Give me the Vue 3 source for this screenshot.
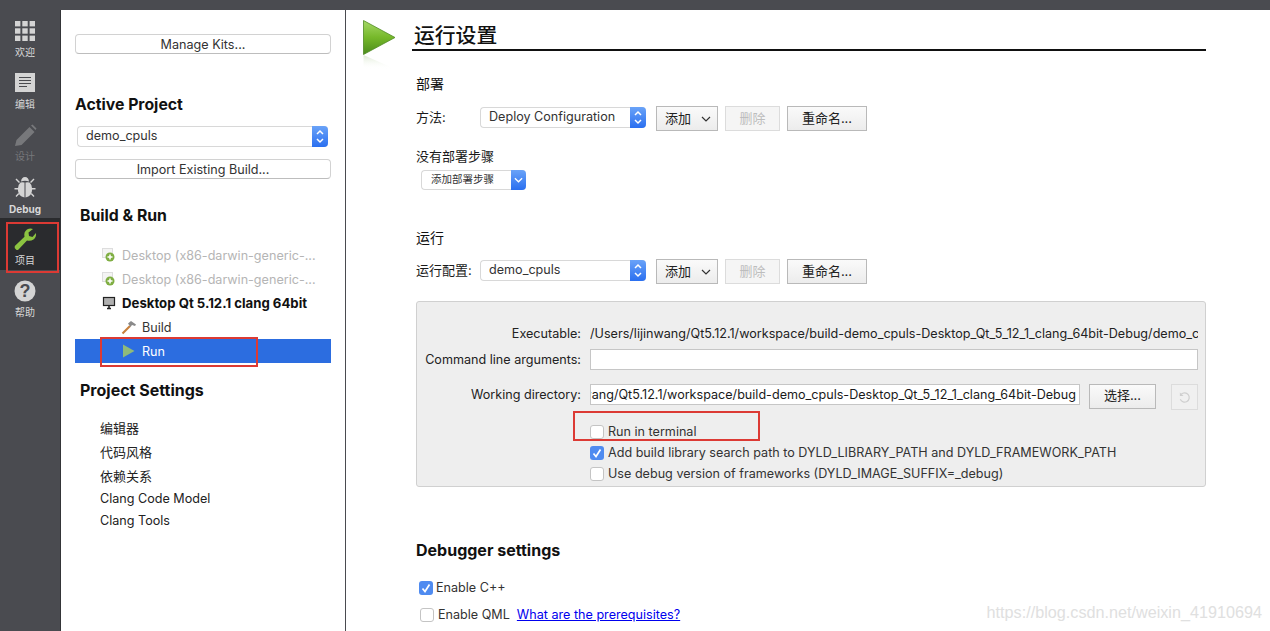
<script setup>
const navItems = [
  { id: 'welcome', label: '欢迎' },
  { id: 'edit', label: '编辑' },
  { id: 'design', label: '设计', disabled: true },
  { id: 'debug', label: 'Debug', bold: true },
  { id: 'project', label: '项目', active: true },
  { id: 'help', label: '帮助' }
]

const settingsLinks = [
  { text: '编辑器', cjk: true },
  { text: '代码风格', cjk: true },
  { text: '依赖关系', cjk: true },
  { text: 'Clang Code Model' },
  { text: 'Clang Tools' }
]
</script>

<template>
  <div class="app">
    <div class="topbar"></div>
    <div class="body">
      <aside class="nav">
        <div
          v-for="item in navItems"
          :key="item.id"
          class="nav-item"
          :class="{ active: item.active, disabled: item.disabled }"
        >
          <svg class="nav-icon" viewBox="0 0 24 24" width="24" height="24">
            <g v-if="item.id === 'welcome'" fill="#d4d4d4">
              <rect x="2" y="2" width="5.4" height="5.4" /><rect x="9.3" y="2" width="5.4" height="5.4" /><rect x="16.6" y="2" width="5.4" height="5.4" />
              <rect x="2" y="9.3" width="5.4" height="5.4" /><rect x="9.3" y="9.3" width="5.4" height="5.4" /><rect x="16.6" y="9.3" width="5.4" height="5.4" />
              <rect x="2" y="16.6" width="5.4" height="5.4" /><rect x="9.3" y="16.6" width="5.4" height="5.4" /><rect x="16.6" y="16.6" width="5.4" height="5.4" />
            </g>
            <g v-else-if="item.id === 'edit'">
              <rect x="2" y="2" width="20" height="19" fill="#d4d4d4" />
              <path d="M6 6.5h12M6 9.500h12M6 12.500h12M6 15.500h8" stroke="#4a4b4f" stroke-width="1.200" />
            </g>
            <path v-else-if="item.id === 'design'" d="M2 23l1.500-6L16.500 4l5 5L8.500 22z M18 2.500l1.500-1 4 4-1 1.500z" fill="#77787b" />
            <g v-else-if="item.id === 'debug'" fill="#d4d4d4">
              <path d="M8 6.500Q8.500 2 12 2t4 4.500Q12 5 8 6.500z" />
              <path d="M11.500 7.500V22.500Q5 21.500 4.800 14 5 9.500 7.500 7.500 9 6.800 11.500 7.500z" />
              <path d="M12.500 7.500V22.500Q19 21.500 19.200 14 19 9.500 16.500 7.500 15 6.800 12.500 7.500z" />
              <path d="M2.500 4.500l1-1 3.500 3.500-1 1z M21.500 4.500l-1-1-3.500 3.500 1 1z M1.500 13h3.500v1.400H1.500z M19 13h3.500v1.400H19z M2.500 21l2.800-3 1 1-2.800 3z M21.500 21l-2.800-3-1 1 2.800 3z" />
            </g>
            <path v-else-if="item.id === 'project'" d="M3 22.500Q1 21 1.800 19L11.500 9.800Q10.500 5 14 2.500 17 1 20 2L15.500 5.500 16 9l3.500 1L23 6Q23.500 10 20.500 12.500 17.500 14.500 14 13.500L5.500 22.500Q4 23.500 3 22.500z" fill="#8cc341" />
            <g v-else>
              <circle cx="12" cy="12" r="10.500" fill="#d4d4d4" />
              <text x="12" y="18" text-anchor="middle" class="help-mark">?</text>
            </g>
          </svg>
          <span class="nav-label" :class="{ bold: item.bold }">{{ item.label }}</span>
        </div>
      </aside>

      <section class="side">
        <button class="mac-btn kits">Manage Kits...</button>
        <h3 class="side-title active-title">Active Project</h3>
        <div class="combo side-combo">
          <span class="combo-text">demo_cpuls</span>
          <span class="combo-arrows">
            <svg viewBox="0 0 16 21" width="16" height="21"><path d="M5 8l3-3 3 3M5 13l3 3 3-3" fill="none" stroke="#fff" stroke-width="1.500" /></svg>
          </span>
        </div>
        <button class="mac-btn import">Import Existing Build...</button>
        <h3 class="side-title build-title">Build &amp; Run</h3>

        <ul class="kit-list">
          <li class="kit dim">
            <svg viewBox="0 0 16 16" width="16" height="16">
              <rect x="1.500" y="1.500" width="10" height="9" fill="#f4f4f4" stroke="#ddd" />
              <circle cx="9" cy="10" r="4.500" fill="#7fae42" />
              <path d="M6.500 10h5M9 7.500v5" stroke="#fff" stroke-width="1.500" />
            </svg>
            <span class="kit-name">Desktop (x86-darwin-generic-...</span>
          </li>
          <li class="kit dim">
            <svg viewBox="0 0 16 16" width="16" height="16">
              <rect x="1.500" y="1.500" width="10" height="9" fill="#f4f4f4" stroke="#ddd" />
              <circle cx="9" cy="10" r="4.500" fill="#7fae42" />
              <path d="M6.500 10h5M9 7.500v5" stroke="#fff" stroke-width="1.500" />
            </svg>
            <span class="kit-name">Desktop (x86-darwin-generic-...</span>
          </li>
          <li class="kit current">
            <svg viewBox="0 0 16 16" width="16" height="16">
              <rect x="2.500" y="2.500" width="11" height="8" fill="#b0b0b0" stroke="#222" stroke-width="1.200" />
              <path d="M6 13.500h4M8 11v2" stroke="#222" stroke-width="1.600" />
            </svg>
            <span class="kit-name">Desktop Qt 5.12.1 clang 64bit</span>
          </li>
          <li class="step">
            <svg viewBox="0 0 16 16" width="16" height="16">
              <path d="M1.500 14.500L9 7" stroke="#c8803c" stroke-width="2.200" />
              <path d="M7 4.500L10 2l5 3.500-1 1.500-3-1-1.500 2z" fill="#8a8a8a" />
            </svg>
            <span>Build</span>
          </li>
          <li class="step selected">
            <svg viewBox="0 0 16 16" width="16" height="16"><path d="M2 1.500L13.500 8 2 14.500z" fill="#8fba7a" /></svg>
            <span>Run</span>
          </li>
        </ul>

        <h3 class="side-title settings-title">Project Settings</h3>
        <ul class="settings-list">
          <li v-for="link in settingsLinks" :key="link.text" :class="{ cjk: link.cjk }">{{ link.text }}</li>
        </ul>

        <div class="marker marker-run"></div>
      </section>

      <main class="main">
        <header class="page-head">
          <svg class="page-icon" viewBox="0 0 33 49" width="33" height="49">
            <defs>
              <linearGradient id="play" x1="0" y1="0" x2="0" y2="1">
                <stop offset="0" stop-color="#a5d866" />
                <stop offset="0.500" stop-color="#76b82a" />
                <stop offset="1" stop-color="#4c8c1c" />
              </linearGradient>
              <linearGradient id="play-shadow" x1="0" y1="0" x2="0" y2="1">
                <stop offset="0" stop-color="#cfe0c0" stop-opacity="0.700" />
                <stop offset="1" stop-color="#fff" stop-opacity="0" />
              </linearGradient>
            </defs>
            <path d="M0.500 0.500L32 17.500 0.500 34.500z" fill="url(#play)" stroke="#4f8a23" stroke-width="0.800" />
            <path d="M0.500 35L32 49H0.500z" fill="url(#play-shadow)" />
          </svg>
          <h1>运行设置</h1>
        </header>

        <h2 class="sec-title deploy-title">部署</h2>
        <div class="config-row deploy-row">
          <label class="row-label">方法:</label>
          <div class="combo">
            <span class="combo-text">Deploy Configuration</span>
            <span class="combo-arrows">
              <svg viewBox="0 0 16 21" width="16" height="21"><path d="M5 8l3-3 3 3M5 13l3 3 3-3" fill="none" stroke="#fff" stroke-width="1.500" /></svg>
            </span>
          </div>
          <button class="qt-btn add">添加
            <svg viewBox="0 0 10 6" width="10" height="6"><path d="M1 1l4 4 4-4" fill="none" stroke="#333" stroke-width="1.200" /></svg>
          </button>
          <button class="qt-btn del" disabled>删除</button>
          <button class="qt-btn rename">重命名...</button>
        </div>
        <p class="no-steps">没有部署步骤</p>
        <div class="mini-combo">
          <span class="mini-text">添加部署步骤</span>
          <span class="mini-arrow">
            <svg viewBox="0 0 10 6" width="9" height="6"><path d="M1 1l4 4 4-4" fill="none" stroke="#fff" stroke-width="1.400" /></svg>
          </span>
        </div>

        <h2 class="sec-title run-title">运行</h2>
        <div class="config-row run-row">
          <label class="row-label">运行配置:</label>
          <div class="combo">
            <span class="combo-text">demo_cpuls</span>
            <span class="combo-arrows">
              <svg viewBox="0 0 16 21" width="16" height="21"><path d="M5 8l3-3 3 3M5 13l3 3 3-3" fill="none" stroke="#fff" stroke-width="1.500" /></svg>
            </span>
          </div>
          <button class="qt-btn add">添加
            <svg viewBox="0 0 10 6" width="10" height="6"><path d="M1 1l4 4 4-4" fill="none" stroke="#333" stroke-width="1.200" /></svg>
          </button>
          <button class="qt-btn del" disabled>删除</button>
          <button class="qt-btn rename">重命名...</button>
        </div>

        <div class="group">
          <div class="form-row exec-row">
            <span class="form-label">Executable:</span>
            <span class="exec-path">/Users/lijinwang/Qt5.12.1/workspace/build-demo_cpuls-Desktop_Qt_5_12_1_clang_64bit-Debug/demo_cpuls</span>
          </div>
          <div class="form-row args-row">
            <span class="form-label">Command line arguments:</span>
            <div class="text-input wide"></div>
          </div>
          <div class="form-row dir-row">
            <span class="form-label">Working directory:</span>
            <div class="text-input dir"><span>/Users/lijinwang/Qt5.12.1/workspace/build-demo_cpuls-Desktop_Qt_5_12_1_clang_64bit-Debug</span></div>
            <button class="qt-btn choose">选择...</button>
            <button class="qt-btn reset" disabled>
              <svg viewBox="0 0 14 14" width="13" height="13"><path d="M3.500 3.500A5 5 0 1 1 2.500 9" fill="none" stroke="#cfcfcf" stroke-width="1.300" /><path d="M2 1.500v4h4z" fill="#cfcfcf" /></svg>
            </button>
          </div>
          <div class="check-row first">
            <span class="check"></span>
            <span>Run in terminal</span>
          </div>
          <div class="check-row">
            <span class="check on">
              <svg viewBox="0 0 14 14" width="14" height="14"><path d="M3.500 7.500l2.500 3 4.500-7" fill="none" stroke="#fff" stroke-width="1.700" /></svg>
            </span>
            <span>Add build library search path to DYLD_LIBRARY_PATH and DYLD_FRAMEWORK_PATH</span>
          </div>
          <div class="check-row">
            <span class="check"></span>
            <span>Use debug version of frameworks (DYLD_IMAGE_SUFFIX=_debug)</span>
          </div>
        </div>

        <h2 class="debugger-title">Debugger settings</h2>
        <div class="check-row cpp-row">
          <span class="check on">
            <svg viewBox="0 0 14 14" width="14" height="14"><path d="M3.500 7.500l2.500 3 4.500-7" fill="none" stroke="#fff" stroke-width="1.700" /></svg>
          </span>
          <span>Enable C++</span>
        </div>
        <div class="check-row qml-row">
          <span class="check"></span>
          <span>Enable QML</span>
          <a class="prereq" href="#">What are the prerequisites?</a>
        </div>

        <div class="marker marker-terminal"></div>
      </main>
    </div>

    <div class="marker marker-nav"></div>
    <div class="watermark">https://blog.csdn.net/weixin_41910694</div>
  </div>
</template>

<style>
html, body {
  margin: 0;
  background: #fff;
}
</style>

<style scoped>
.app {
  position: relative;
  width: 1270px;
  height: 631px;
  overflow: hidden;
  font-family: Inter, "Noto Sans CJK SC", sans-serif;
  font-size: 12.6px;
  color: #1a1a1a;
  background: #fff;
}

.topbar {
  height: 10px;
  background: #4a4b50;
}

.body {
  display: flex;
  height: 621px;
}

/* left mode bar */
.nav {
  width: 60px;
  flex: none;
  background: #4a4b50;
  border-right: 1px solid #343538;
}

.nav-item {
  height: 52px;
  display: flex;
  flex-direction: column;
  align-items: center;
  padding: 9px 10px 0 0;
  box-sizing: border-box;
}

.nav-item.active {
  background: #2a2b2e;
}

.nav-icon {
  display: block;
}

.nav-label {
  margin-top: 2px;
  font-size: 10px;
  line-height: 14px;
  color: #d8d8d8;
}

.nav-label.bold {
  font-weight: 700;
  margin-top: 3px;
  white-space: nowrap;
}

.nav-item.disabled .nav-label {
  color: #77787b;
}

.help-mark {
  font-family: "Liberation Sans", sans-serif;
  font-size: 18px;
  font-weight: 700;
  fill: #4a4b50;
}

/* project side panel */
.side {
  position: relative;
  width: 285px;
  flex: none;
  box-sizing: border-box;
  padding-left: 14px;
  border-right: 1px solid #4a4b50;
}

.mac-btn {
  display: block;
  width: 256px;
  height: 20px;
  padding: 0;
  border: 1px solid #d2d2d2;
  border-bottom-color: #bdbdbd;
  border-radius: 4px;
  background: #fff;
  font: inherit;
  color: #333;
}

.kits {
  margin-top: 24px;
}

.side-title {
  margin: 0;
  font-size: 15.8px;
  line-height: 20px;
  font-weight: 700;
  color: #111;
}

.active-title {
  margin-top: 41px;
}

.combo {
  display: flex;
  width: 166px;
  height: 21px;
  box-sizing: border-box;
  border: 1px solid #d8d8d8;
  border-right: 0;
  border-radius: 4px;
  background: #fff;
}

.combo-text {
  flex: 1;
  padding-left: 8px;
  line-height: 17px;
  color: #333;
  white-space: nowrap;
}

.combo-arrows {
  width: 16px;
  height: 21px;
  margin-top: -1px;
  border-radius: 0 4px 4px 0;
  background: linear-gradient(#6aa3f8, #2a6ff0);
}

.combo-arrows svg {
  display: block;
}

.side-combo {
  width: 251px;
  margin: 11px 0 0 2px;
}

.import {
  margin-top: 12px;
}

.build-title {
  margin: 27px 0 0 5px;
}

.kit-list {
  list-style: none;
  margin: 17px 0 0;
  padding: 0;
  width: 256px;
}

.kit-list li {
  display: flex;
  align-items: center;
  height: 24px;
}

.kit-list svg {
  flex: none;
}

.kit {
  padding-left: 26px;
  gap: 5px;
}

.kit.dim {
  color: #b5b5b5;
}

.kit.current {
  font-size: 13.2px;
  font-weight: 700;
  color: #111;
}

.step {
  padding-left: 46px;
  gap: 5px;
  color: #333;
}

.step.selected {
  background: #2c6de0;
  color: #fff;
}

.settings-title {
  margin: 17px 0 0 5px;
  font-size: 16px;
}

.settings-list {
  list-style: none;
  margin: 16px 0 0;
  padding: 0 0 0 25px;
  color: #222;
}

.settings-list li {
  height: 21.500px;
  line-height: 21.500px;
}

.settings-list li.cjk {
  height: 24px;
  line-height: 24px;
  font-size: 13px;
}

/* red annotations over the screenshot */
.marker {
  position: absolute;
  box-sizing: border-box;
  border: 2px solid #dc3a34;
}

.marker-nav {
  left: 6px;
  top: 222px;
  width: 53px;
  height: 51px;
}

.marker-run {
  left: 39px;
  top: 327px;
  width: 158px;
  height: 30px;
}

.marker-terminal {
  left: 227px;
  top: 401px;
  width: 187px;
  height: 30px;
}

/* main settings */
.main {
  position: relative;
  flex: 1;
  box-sizing: border-box;
  padding-left: 70px;
  padding-right: 64px;
}

.page-head {
  position: relative;
  height: 41px;
  box-sizing: border-box;
  border-bottom: 2px solid #111;
  margin-left: -4px;
}

.page-icon {
  position: absolute;
  left: -49px;
  top: 10px;
}

.page-head h1 {
  margin: 0;
  padding: 13px 0 0 2px;
  font-size: 20.8px;
  line-height: 26px;
  font-weight: 500;
  color: #111;
}

.sec-title {
  margin: 0;
  font-size: 14px;
  line-height: 20px;
  font-weight: 400;
  color: #111;
}

.deploy-title {
  margin-top: 23px;
}

.config-row {
  display: flex;
  align-items: flex-start;
}

.deploy-row {
  margin-top: 13px;
}

.row-label {
  width: 64px;
  flex: none;
  line-height: 21px;
  font-size: 13px;
}

.qt-btn {
  height: 25px;
  margin-top: -1px;
  padding: 0 0 2px;
  border: 1px solid #b9b9b9;
  background: linear-gradient(#fafafa, #ececec);
  font: inherit;
  font-size: 13px;
  color: #222;
  margin-left: 7px;
}

.qt-btn.add {
  width: 62px;
  margin-left: 10px;
  display: flex;
  align-items: center;
  justify-content: space-between;
  padding: 0 6px 2px 8px;
  box-sizing: border-box;
}

.qt-btn.add svg {
  margin-top: 2px;
}

.qt-btn.del {
  width: 55px;
  border-color: #dcdcdc;
  background: #f5f5f5;
  color: #bdbdbd;
}

.qt-btn.rename {
  width: 80px;
}

.no-steps {
  margin: 16px 0 0;
  line-height: 18px;
  font-size: 13px;
}

.mini-combo {
  display: flex;
  width: 105px;
  height: 20px;
  margin: 5px 0 0 5px;
  box-sizing: border-box;
  border: 1px solid #d8d8d8;
  border-right: 0;
  border-radius: 4px;
  background: #fff;
}

.mini-text {
  flex: 1;
  padding-left: 9px;
  font-size: 10.500px;
  line-height: 18px;
  color: #333;
}

.mini-arrow {
  display: flex;
  align-items: center;
  justify-content: center;
  width: 15px;
  height: 20px;
  margin-top: -1px;
  border-radius: 0 4px 4px 0;
  background: linear-gradient(#6aa3f8, #2a6ff0);
}

.run-title {
  margin-top: 38px;
}

.run-row {
  margin-top: 12px;
}

.group {
  position: relative;
  width: 790px;
  height: 186px;
  box-sizing: border-box;
  margin-top: 17px;
  padding: 22px 7px 0 0;
  border: 1px solid #d0d0d0;
  border-radius: 3px;
  background: #eeeeee;
}

.form-row {
  display: flex;
}

.form-label {
  width: 164px;
  flex: none;
  text-align: right;
  color: #222;
  margin-right: 9px;
}

.exec-row {
  line-height: 20px;
  height: 20px;
}

.exec-path {
  flex: 1;
  min-width: 0;
  overflow: hidden;
  white-space: nowrap;
  color: #222;
}

.args-row {
  margin-top: 5px;
  line-height: 21px;
}

.text-input {
  box-sizing: border-box;
  height: 21px;
  border: 1px solid #c6c6c6;
  background: #fff;
  overflow: hidden;
  white-space: nowrap;
}

.text-input.wide {
  flex: 1;
}

.dir-row {
  margin-top: 14px;
  line-height: 21px;
}

.text-input.dir {
  width: 490px;
  direction: rtl;
  padding-right: 3px;
  line-height: 19px;
}

.text-input.dir span {
  unicode-bidi: plaintext;
}

.qt-btn.choose {
  width: 67px;
  margin: 0 0 0 9px;
}

.qt-btn.reset {
  width: 27px;
  height: 26px;
  margin: 0 0 0 15px;
  padding: 0;
  border-color: #dcdcdc;
  background: #f0f0f0;
  display: flex;
  align-items: center;
  justify-content: center;
}

.check-row {
  display: flex;
  align-items: center;
  height: 21px;
  padding-left: 173px;
  color: #333;
  white-space: nowrap;
}

.check-row.first {
  margin-top: 11px;
}

.check {
  width: 14px;
  height: 14px;
  flex: none;
  box-sizing: border-box;
  margin-right: 4px;
  border: 1px solid #c4c4c4;
  border-radius: 3px;
  background: #fff;
}

.check.on {
  border: 0;
  background: #4f8bf0;
}

.check svg {
  display: block;
}

.debugger-title {
  margin: 53px 0 0;
  font-size: 16px;
  line-height: 20px;
  font-weight: 700;
  color: #111;
}

.cpp-row {
  padding-left: 3px;
  margin-top: 17px;
}

.cpp-row .check {
  margin-right: 3px;
}

.qml-row {
  padding-left: 4px;
  margin-top: 6px;
}

.prereq {
  margin-left: 7px;
  color: #0000ee;
}

.watermark {
  position: absolute;
  right: 8px;
  top: 603px;
  font-family: "Liberation Sans", sans-serif;
  font-size: 16.2px;
  line-height: 18px;
  color: #e0e0e0;
  pointer-events: none;
}
</style>
